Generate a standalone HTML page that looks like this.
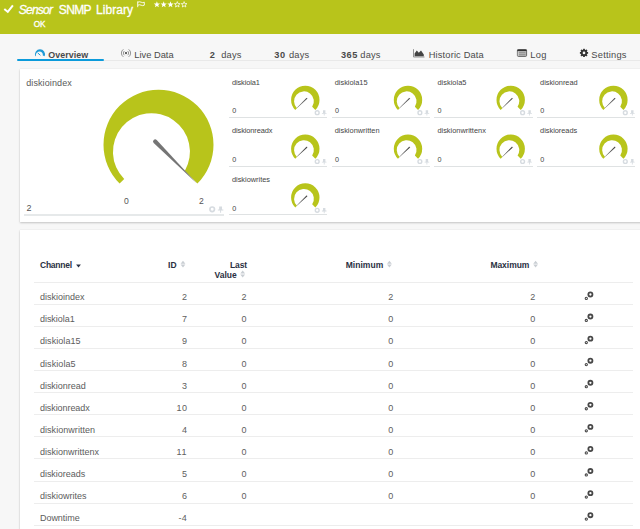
<!DOCTYPE html><html><head><meta charset="utf-8"><style>
*{margin:0;padding:0;box-sizing:border-box}
html,body{width:640px;height:529px;overflow:hidden;background:#f7f7f7;font-family:"Liberation Sans",sans-serif;}
.a{position:absolute;white-space:nowrap;line-height:1}
#hdr{position:absolute;left:0;top:0;width:640px;height:34px;background:#b8c41b}
.panel{position:absolute;background:#fff;box-shadow:0 1px 2px rgba(0,0,0,.2),0 0 1px rgba(0,0,0,.1)}
.hl{position:absolute;height:1px;background:#ededed}
.ul{position:absolute;background:#e6e9ea}
svg{position:absolute;left:0;top:0}
</style></head><body><div id="hdr"></div>
<div class="panel" style="left:20px;top:69px;width:640px;height:153px"></div>
<div class="panel" style="left:20px;top:230px;width:640px;height:320px"></div>
<div class="a" style="left:18px;top:60px;width:640px;height:1px;background:#e9e9e9"></div>
<div class="a" style="left:17.3px;top:59.4px;width:86.5px;height:1.7px;background:#0c9bdb;border-radius:1px"></div>
<div class="ul" style="left:23.8px;top:214.3px;width:200.6px;height:1.5px"></div>
<div class="ul" style="left:228.80px;top:116.80px;width:98.4px;height:1px;background:#dfe2e3"></div>
<div class="ul" style="left:331.50px;top:116.80px;width:98.4px;height:1px;background:#dfe2e3"></div>
<div class="ul" style="left:434.20px;top:116.80px;width:98.4px;height:1px;background:#dfe2e3"></div>
<div class="ul" style="left:536.90px;top:116.80px;width:98.4px;height:1px;background:#dfe2e3"></div>
<div class="ul" style="left:228.80px;top:165.60px;width:98.4px;height:1px;background:#dfe2e3"></div>
<div class="ul" style="left:331.50px;top:165.60px;width:98.4px;height:1px;background:#dfe2e3"></div>
<div class="ul" style="left:434.20px;top:165.60px;width:98.4px;height:1px;background:#dfe2e3"></div>
<div class="ul" style="left:536.90px;top:165.60px;width:98.4px;height:1px;background:#dfe2e3"></div>
<div class="ul" style="left:228.80px;top:214.40px;width:98.4px;height:1px;background:#dfe2e3"></div>
<div class="hl" style="left:34px;top:282px;width:599.3px"></div>
<div class="hl" style="left:34px;top:304.00px;width:599.3px"></div>
<div class="hl" style="left:34px;top:326.07px;width:599.3px"></div>
<div class="hl" style="left:34px;top:348.14px;width:599.3px"></div>
<div class="hl" style="left:34px;top:370.21px;width:599.3px"></div>
<div class="hl" style="left:34px;top:392.28px;width:599.3px"></div>
<div class="hl" style="left:34px;top:414.35px;width:599.3px"></div>
<div class="hl" style="left:34px;top:436.42px;width:599.3px"></div>
<div class="hl" style="left:34px;top:458.49px;width:599.3px"></div>
<div class="hl" style="left:34px;top:480.56px;width:599.3px"></div>
<div class="hl" style="left:34px;top:502.63px;width:599.3px"></div>
<div class="hl" style="left:34px;top:524.70px;width:599.3px"></div>
<div class="a" style="left:18.76px;top:4px;font-size:12px;color:#fff;font-style:italic;letter-spacing:-0.759px;-webkit-text-stroke:0.3px #fff;">Sensor</div>
<div class="a" style="left:58.86px;top:4px;font-size:12px;color:#fff;letter-spacing:-0.673px;-webkit-text-stroke:0.3px #fff;">SNMP</div>
<div class="a" style="left:96.06px;top:4px;font-size:12px;color:#fff;letter-spacing:0.042px;-webkit-text-stroke:0.3px #fff;">Library</div>
<div class="a" style="left:33.83px;top:21px;font-size:8.2px;color:#fff;letter-spacing:-0.248px;-webkit-text-stroke:0.3px #fff;">OK</div>
<div class="a" style="left:48.28px;top:51px;font-size:8.9px;color:#4a4a4a;font-weight:bold;letter-spacing:0.045px;">Overview</div>
<div class="a" style="left:134.35px;top:51px;font-size:9.3px;color:#4a4a4a;">Live Data</div>
<div class="a" style="left:209.64px;top:51px;font-size:9.2px;color:#4a4a4a;font-weight:bold;">2</div>
<div class="a" style="left:221.25px;top:51px;font-size:9.3px;color:#4a4a4a;letter-spacing:0.190px;">days</div>
<div class="a" style="left:274.36px;top:51px;font-size:9.2px;color:#4a4a4a;font-weight:bold;letter-spacing:0.527px;">30</div>
<div class="a" style="left:288.95px;top:51px;font-size:9.3px;color:#4a4a4a;letter-spacing:0.190px;">days</div>
<div class="a" style="left:340.96px;top:51px;font-size:9.2px;color:#4a4a4a;font-weight:bold;letter-spacing:0.515px;">365</div>
<div class="a" style="left:360.35px;top:51px;font-size:9.3px;color:#4a4a4a;letter-spacing:0.165px;">days</div>
<div class="a" style="left:428.75px;top:51px;font-size:9.3px;color:#4a4a4a;letter-spacing:0.145px;">Historic Data</div>
<div class="a" style="left:530.15px;top:51px;font-size:9.3px;color:#4a4a4a;letter-spacing:0.395px;">Log</div>
<div class="a" style="left:591.35px;top:51px;font-size:9.3px;color:#4a4a4a;letter-spacing:0.226px;">Settings</div>
<div class="a" style="left:26.17px;top:79px;font-size:9px;color:#5a5a5a;letter-spacing:0.107px;">diskioindex</div>
<div class="a" style="left:26.42px;top:204px;font-size:9px;color:#555;">2</div>
<div class="a" style="left:124.06px;top:197px;font-size:8.6px;color:#555;">0</div>
<div class="a" style="left:199.06px;top:197px;font-size:8.6px;color:#555;">2</div>
<div class="a" style="left:231.98px;top:79px;font-size:7.4px;color:#444;letter-spacing:-0.103px;">diskiola1</div>
<div class="a" style="left:232.20px;top:107px;font-size:7.2px;color:#444;">0</div>
<div class="a" style="left:334.68px;top:79px;font-size:7.4px;color:#444;letter-spacing:0.006px;">diskiola15</div>
<div class="a" style="left:334.90px;top:107px;font-size:7.2px;color:#444;">0</div>
<div class="a" style="left:437.38px;top:79px;font-size:7.4px;color:#444;letter-spacing:0.041px;">diskiola5</div>
<div class="a" style="left:437.60px;top:107px;font-size:7.2px;color:#444;">0</div>
<div class="a" style="left:540.08px;top:79px;font-size:7.4px;color:#444;letter-spacing:-0.025px;">diskionread</div>
<div class="a" style="left:540.30px;top:107px;font-size:7.2px;color:#444;">0</div>
<div class="a" style="left:231.98px;top:127px;font-size:7.4px;color:#444;letter-spacing:-0.089px;">diskionreadx</div>
<div class="a" style="left:232.20px;top:156px;font-size:7.2px;color:#444;">0</div>
<div class="a" style="left:334.68px;top:127px;font-size:7.4px;color:#444;letter-spacing:0.011px;">diskionwritten</div>
<div class="a" style="left:334.90px;top:156px;font-size:7.2px;color:#444;">0</div>
<div class="a" style="left:437.38px;top:127px;font-size:7.4px;color:#444;">diskionwrittenx</div>
<div class="a" style="left:437.60px;top:156px;font-size:7.2px;color:#444;">0</div>
<div class="a" style="left:540.08px;top:127px;font-size:7.4px;color:#444;letter-spacing:-0.023px;">diskioreads</div>
<div class="a" style="left:540.30px;top:156px;font-size:7.2px;color:#444;">0</div>
<div class="a" style="left:231.98px;top:176px;font-size:7.4px;color:#444;letter-spacing:-0.014px;">diskiowrites</div>
<div class="a" style="left:232.20px;top:205px;font-size:7.2px;color:#444;">0</div>
<div class="a" style="left:40.01px;top:261px;font-size:8.5px;color:#2a3042;font-weight:bold;letter-spacing:-0.242px;">Channel</div>
<div class="a" style="left:168.10px;top:261px;font-size:8.5px;color:#2a3042;font-weight:bold;">ID</div>
<div class="a" style="left:230.00px;top:261px;font-size:8.5px;color:#2a3042;font-weight:bold;letter-spacing:-0.099px;">Last</div>
<div class="a" style="left:214.41px;top:271px;font-size:8.5px;color:#2a3042;font-weight:bold;letter-spacing:0.034px;">Value</div>
<div class="a" style="left:345.65px;top:261px;font-size:8.5px;color:#2a3042;font-weight:bold;letter-spacing:0.054px;">Minimum</div>
<div class="a" style="left:490.40px;top:261px;font-size:8.5px;color:#2a3042;font-weight:bold;letter-spacing:-0.040px;">Maximum</div>
<div class="a" style="left:39.97px;top:293px;font-size:9px;color:#5c5c5c;letter-spacing:0.012px;">diskioindex</div>
<div class="a" style="left:181.89px;top:293px;font-size:9px;color:#606060;">2</div>
<div class="a" style="left:241.59px;top:293px;font-size:9px;color:#606060;">2</div>
<div class="a" style="left:388.29px;top:293px;font-size:9px;color:#606060;">2</div>
<div class="a" style="left:530.29px;top:293px;font-size:9px;color:#606060;">2</div>
<div class="a" style="left:39.97px;top:315px;font-size:9px;color:#5c5c5c;letter-spacing:-0.041px;">diskiola1</div>
<div class="a" style="left:181.89px;top:315px;font-size:9px;color:#606060;">7</div>
<div class="a" style="left:241.59px;top:315px;font-size:9px;color:#606060;">0</div>
<div class="a" style="left:388.29px;top:315px;font-size:9px;color:#606060;">0</div>
<div class="a" style="left:530.29px;top:315px;font-size:9px;color:#606060;">0</div>
<div class="a" style="left:39.97px;top:337px;font-size:9px;color:#5c5c5c;letter-spacing:0.063px;">diskiola15</div>
<div class="a" style="left:181.89px;top:337px;font-size:9px;color:#606060;">9</div>
<div class="a" style="left:241.59px;top:337px;font-size:9px;color:#606060;">0</div>
<div class="a" style="left:388.29px;top:337px;font-size:9px;color:#606060;">0</div>
<div class="a" style="left:530.29px;top:337px;font-size:9px;color:#606060;">0</div>
<div class="a" style="left:39.97px;top:360px;font-size:9px;color:#5c5c5c;letter-spacing:0.070px;">diskiola5</div>
<div class="a" style="left:181.89px;top:360px;font-size:9px;color:#606060;">8</div>
<div class="a" style="left:241.59px;top:360px;font-size:9px;color:#606060;">0</div>
<div class="a" style="left:388.29px;top:360px;font-size:9px;color:#606060;">0</div>
<div class="a" style="left:530.29px;top:360px;font-size:9px;color:#606060;">0</div>
<div class="a" style="left:39.97px;top:382px;font-size:9px;color:#5c5c5c;letter-spacing:-0.034px;">diskionread</div>
<div class="a" style="left:181.89px;top:382px;font-size:9px;color:#606060;">3</div>
<div class="a" style="left:241.59px;top:382px;font-size:9px;color:#606060;">0</div>
<div class="a" style="left:388.29px;top:382px;font-size:9px;color:#606060;">0</div>
<div class="a" style="left:530.29px;top:382px;font-size:9px;color:#606060;">0</div>
<div class="a" style="left:39.97px;top:404px;font-size:9px;color:#5c5c5c;letter-spacing:-0.073px;">diskionreadx</div>
<div class="a" style="left:176.57px;top:404px;font-size:9px;color:#606060;letter-spacing:0.322px;">10</div>
<div class="a" style="left:241.59px;top:404px;font-size:9px;color:#606060;">0</div>
<div class="a" style="left:388.29px;top:404px;font-size:9px;color:#606060;">0</div>
<div class="a" style="left:530.29px;top:404px;font-size:9px;color:#606060;">0</div>
<div class="a" style="left:39.97px;top:426px;font-size:9px;color:#5c5c5c;letter-spacing:0.045px;">diskionwritten</div>
<div class="a" style="left:181.89px;top:426px;font-size:9px;color:#606060;">4</div>
<div class="a" style="left:241.59px;top:426px;font-size:9px;color:#606060;">0</div>
<div class="a" style="left:388.29px;top:426px;font-size:9px;color:#606060;">0</div>
<div class="a" style="left:530.29px;top:426px;font-size:9px;color:#606060;">0</div>
<div class="a" style="left:39.97px;top:448px;font-size:9px;color:#5c5c5c;letter-spacing:0.009px;">diskionwrittenx</div>
<div class="a" style="left:176.57px;top:448px;font-size:9px;color:#606060;letter-spacing:0.658px;">11</div>
<div class="a" style="left:241.59px;top:448px;font-size:9px;color:#606060;">0</div>
<div class="a" style="left:388.29px;top:448px;font-size:9px;color:#606060;">0</div>
<div class="a" style="left:530.29px;top:448px;font-size:9px;color:#606060;">0</div>
<div class="a" style="left:39.97px;top:470px;font-size:9px;color:#5c5c5c;letter-spacing:-0.034px;">diskioreads</div>
<div class="a" style="left:181.89px;top:470px;font-size:9px;color:#606060;">5</div>
<div class="a" style="left:241.59px;top:470px;font-size:9px;color:#606060;">0</div>
<div class="a" style="left:388.29px;top:470px;font-size:9px;color:#606060;">0</div>
<div class="a" style="left:530.29px;top:470px;font-size:9px;color:#606060;">0</div>
<div class="a" style="left:39.97px;top:492px;font-size:9px;color:#5c5c5c;letter-spacing:0.012px;">diskiowrites</div>
<div class="a" style="left:181.89px;top:492px;font-size:9px;color:#606060;">6</div>
<div class="a" style="left:241.59px;top:492px;font-size:9px;color:#606060;">0</div>
<div class="a" style="left:388.29px;top:492px;font-size:9px;color:#606060;">0</div>
<div class="a" style="left:530.29px;top:492px;font-size:9px;color:#606060;">0</div>
<div class="a" style="left:39.97px;top:514px;font-size:9px;color:#5c5c5c;letter-spacing:-0.044px;">Downtime</div>
<div class="a" style="left:178.47px;top:514px;font-size:9px;color:#606060;letter-spacing:0.372px;">-4</div>
<svg width="640" height="529" viewBox="0 0 640 529"><path d="M119.61,183.59 A55.00,55.00 0 1 1 197.39,183.59 L184.79,170.99 A38.50,38.50 0 1 0 124.21,178.99 Z" fill="#b8c41b"/>
<path d="M153.7,142.9 L196.9,183.6 L156.7,139.9 A2.1,2.1 0 0 0 153.7,142.9 Z" fill="#757575"/>
<circle cx="212.2" cy="209.3" r="2.28" fill="none" stroke="#d6dbe0" stroke-width="1.68"/><path d="M219.16,206.42000000000002 h2.88 v3.12 h1.32 v1.08 h-5.52 v-1.08 h1.32 Z M220.12,210.62 h0.96 v2.16 h-0.96 Z" fill="#d6dbe0"/>
<path d="M295.26,109.94 A14.20,14.20 0 1 1 315.34,109.94 L312.17,106.77 A9.90,9.90 0 1 0 296.96,108.24 Z" fill="#b8c41b"/>
<path d="M306.60,97.90 L296.90,108.00 L307.30,98.60 Z" fill="#3a3a3a" stroke="#3a3a3a" stroke-width="0.2"/>
<circle cx="317.2" cy="112.7" r="1.9" fill="none" stroke="#d6dbe0" stroke-width="1.4"/><path d="M323.0,110.3 h2.4 v2.6 h1.1 v0.9 h-4.6 v-0.9 h1.1 Z M323.8,113.8 h0.8 v1.8 h-0.8 Z" fill="#d6dbe0"/>
<path d="M397.96,109.94 A14.20,14.20 0 1 1 418.04,109.94 L414.87,106.77 A9.90,9.90 0 1 0 399.66,108.24 Z" fill="#b8c41b"/>
<path d="M409.30,97.90 L399.60,108.00 L410.00,98.60 Z" fill="#3a3a3a" stroke="#3a3a3a" stroke-width="0.2"/>
<circle cx="419.90000000000003" cy="112.7" r="1.9" fill="none" stroke="#d6dbe0" stroke-width="1.4"/><path d="M425.70000000000005,110.3 h2.4 v2.6 h1.1 v0.9 h-4.6 v-0.9 h1.1 Z M426.50000000000006,113.8 h0.8 v1.8 h-0.8 Z" fill="#d6dbe0"/>
<path d="M500.66,109.94 A14.20,14.20 0 1 1 520.74,109.94 L517.57,106.77 A9.90,9.90 0 1 0 502.36,108.24 Z" fill="#b8c41b"/>
<path d="M512.00,97.90 L502.30,108.00 L512.70,98.60 Z" fill="#3a3a3a" stroke="#3a3a3a" stroke-width="0.2"/>
<circle cx="522.6" cy="112.7" r="1.9" fill="none" stroke="#d6dbe0" stroke-width="1.4"/><path d="M528.4,110.3 h2.4 v2.6 h1.1 v0.9 h-4.6 v-0.9 h1.1 Z M529.2,113.8 h0.8 v1.8 h-0.8 Z" fill="#d6dbe0"/>
<path d="M603.36,109.94 A14.20,14.20 0 1 1 623.44,109.94 L620.27,106.77 A9.90,9.90 0 1 0 605.06,108.24 Z" fill="#b8c41b"/>
<path d="M614.70,97.90 L605.00,108.00 L615.40,98.60 Z" fill="#3a3a3a" stroke="#3a3a3a" stroke-width="0.2"/>
<circle cx="625.3" cy="112.7" r="1.9" fill="none" stroke="#d6dbe0" stroke-width="1.4"/><path d="M631.0999999999999,110.3 h2.4 v2.6 h1.1 v0.9 h-4.6 v-0.9 h1.1 Z M631.9,113.8 h0.8 v1.8 h-0.8 Z" fill="#d6dbe0"/>
<path d="M295.26,158.74 A14.20,14.20 0 1 1 315.34,158.74 L312.17,155.57 A9.90,9.90 0 1 0 296.96,157.04 Z" fill="#b8c41b"/>
<path d="M306.60,146.70 L296.90,156.80 L307.30,147.40 Z" fill="#3a3a3a" stroke="#3a3a3a" stroke-width="0.2"/>
<circle cx="317.2" cy="161.5" r="1.9" fill="none" stroke="#d6dbe0" stroke-width="1.4"/><path d="M323.0,159.1 h2.4 v2.6 h1.1 v0.9 h-4.6 v-0.9 h1.1 Z M323.8,162.6 h0.8 v1.8 h-0.8 Z" fill="#d6dbe0"/>
<path d="M397.96,158.74 A14.20,14.20 0 1 1 418.04,158.74 L414.87,155.57 A9.90,9.90 0 1 0 399.66,157.04 Z" fill="#b8c41b"/>
<path d="M409.30,146.70 L399.60,156.80 L410.00,147.40 Z" fill="#3a3a3a" stroke="#3a3a3a" stroke-width="0.2"/>
<circle cx="419.90000000000003" cy="161.5" r="1.9" fill="none" stroke="#d6dbe0" stroke-width="1.4"/><path d="M425.70000000000005,159.1 h2.4 v2.6 h1.1 v0.9 h-4.6 v-0.9 h1.1 Z M426.50000000000006,162.6 h0.8 v1.8 h-0.8 Z" fill="#d6dbe0"/>
<path d="M500.66,158.74 A14.20,14.20 0 1 1 520.74,158.74 L517.57,155.57 A9.90,9.90 0 1 0 502.36,157.04 Z" fill="#b8c41b"/>
<path d="M512.00,146.70 L502.30,156.80 L512.70,147.40 Z" fill="#3a3a3a" stroke="#3a3a3a" stroke-width="0.2"/>
<circle cx="522.6" cy="161.5" r="1.9" fill="none" stroke="#d6dbe0" stroke-width="1.4"/><path d="M528.4,159.1 h2.4 v2.6 h1.1 v0.9 h-4.6 v-0.9 h1.1 Z M529.2,162.6 h0.8 v1.8 h-0.8 Z" fill="#d6dbe0"/>
<path d="M603.36,158.74 A14.20,14.20 0 1 1 623.44,158.74 L620.27,155.57 A9.90,9.90 0 1 0 605.06,157.04 Z" fill="#b8c41b"/>
<path d="M614.70,146.70 L605.00,156.80 L615.40,147.40 Z" fill="#3a3a3a" stroke="#3a3a3a" stroke-width="0.2"/>
<circle cx="625.3" cy="161.5" r="1.9" fill="none" stroke="#d6dbe0" stroke-width="1.4"/><path d="M631.0999999999999,159.1 h2.4 v2.6 h1.1 v0.9 h-4.6 v-0.9 h1.1 Z M631.9,162.6 h0.8 v1.8 h-0.8 Z" fill="#d6dbe0"/>
<path d="M295.26,207.54 A14.20,14.20 0 1 1 315.34,207.54 L312.17,204.37 A9.90,9.90 0 1 0 296.96,205.84 Z" fill="#b8c41b"/>
<path d="M306.60,195.50 L296.90,205.60 L307.30,196.20 Z" fill="#3a3a3a" stroke="#3a3a3a" stroke-width="0.2"/>
<circle cx="317.2" cy="210.3" r="1.9" fill="none" stroke="#d6dbe0" stroke-width="1.4"/><path d="M323.0,207.9 h2.4 v2.6 h1.1 v0.9 h-4.6 v-0.9 h1.1 Z M323.8,211.4 h0.8 v1.8 h-0.8 Z" fill="#d6dbe0"/>
<path d="M76.1,264.6 h4.8 l-2.4,2.8 Z" fill="#2a3042"/>
<path d="M180.6,263.7 l2.4,-3.0 l2.4,3.0 Z M180.6,264.59999999999997 h4.8 l-2.4,3.0 Z" fill="#c9ced3"/>
<path d="M240.3,273.6 l2.4,-3.0 l2.4,3.0 Z M240.3,274.5 h4.8 l-2.4,3.0 Z" fill="#c9ced3"/>
<path d="M387.0,263.7 l2.4,-3.0 l2.4,3.0 Z M387.0,264.59999999999997 h4.8 l-2.4,3.0 Z" fill="#c9ced3"/>
<path d="M533.2,263.7 l2.4,-3.0 l2.4,3.0 Z M533.2,264.59999999999997 h4.8 l-2.4,3.0 Z" fill="#c9ced3"/>
<circle cx="590.40" cy="294.50" r="2.05" fill="none" stroke="#484848" stroke-width="1.8"/><circle cx="586.30" cy="298.40" r="1.1" fill="none" stroke="#484848" stroke-width="1.1"/>
<circle cx="590.40" cy="316.57" r="2.05" fill="none" stroke="#484848" stroke-width="1.8"/><circle cx="586.30" cy="320.47" r="1.1" fill="none" stroke="#484848" stroke-width="1.1"/>
<circle cx="590.40" cy="338.64" r="2.05" fill="none" stroke="#484848" stroke-width="1.8"/><circle cx="586.30" cy="342.54" r="1.1" fill="none" stroke="#484848" stroke-width="1.1"/>
<circle cx="590.40" cy="360.71" r="2.05" fill="none" stroke="#484848" stroke-width="1.8"/><circle cx="586.30" cy="364.61" r="1.1" fill="none" stroke="#484848" stroke-width="1.1"/>
<circle cx="590.40" cy="382.78" r="2.05" fill="none" stroke="#484848" stroke-width="1.8"/><circle cx="586.30" cy="386.68" r="1.1" fill="none" stroke="#484848" stroke-width="1.1"/>
<circle cx="590.40" cy="404.85" r="2.05" fill="none" stroke="#484848" stroke-width="1.8"/><circle cx="586.30" cy="408.75" r="1.1" fill="none" stroke="#484848" stroke-width="1.1"/>
<circle cx="590.40" cy="426.92" r="2.05" fill="none" stroke="#484848" stroke-width="1.8"/><circle cx="586.30" cy="430.82" r="1.1" fill="none" stroke="#484848" stroke-width="1.1"/>
<circle cx="590.40" cy="448.99" r="2.05" fill="none" stroke="#484848" stroke-width="1.8"/><circle cx="586.30" cy="452.89" r="1.1" fill="none" stroke="#484848" stroke-width="1.1"/>
<circle cx="590.40" cy="471.06" r="2.05" fill="none" stroke="#484848" stroke-width="1.8"/><circle cx="586.30" cy="474.96" r="1.1" fill="none" stroke="#484848" stroke-width="1.1"/>
<circle cx="590.40" cy="493.13" r="2.05" fill="none" stroke="#484848" stroke-width="1.8"/><circle cx="586.30" cy="497.03" r="1.1" fill="none" stroke="#484848" stroke-width="1.1"/>
<circle cx="590.40" cy="515.20" r="2.05" fill="none" stroke="#484848" stroke-width="1.8"/><circle cx="586.30" cy="519.10" r="1.1" fill="none" stroke="#484848" stroke-width="1.1"/>
<path d="M4.3,8.9 L7.8,11.9 L12.9,5.4" stroke="#fff" stroke-width="2" fill="none" stroke-linecap="butt" stroke-linejoin="miter"/>
<path d="M137.7,1.4 V7.2 M137.9,2.2 q1.6,-0.9 3.2,0 t3.2,0 v3 q-1.6,0.9 -3.2,0 t-3.2,0" stroke="#fff" stroke-width="0.9" fill="none"/>
<polygon points="156.90,1.30 157.71,3.48 160.04,3.58 158.22,5.03 158.84,7.27 156.90,5.99 154.96,7.27 155.58,5.03 153.76,3.58 156.09,3.48" fill="#fff"/>
<polygon points="163.70,1.30 164.51,3.48 166.84,3.58 165.02,5.03 165.64,7.27 163.70,5.99 161.76,7.27 162.38,5.03 160.56,3.58 162.89,3.48" fill="#fff"/>
<polygon points="170.50,1.30 171.31,3.48 173.64,3.58 171.82,5.03 172.44,7.27 170.50,5.99 168.56,7.27 169.18,5.03 167.36,3.58 169.69,3.48" fill="#fff"/>
<polygon points="177.30,1.60 178.04,3.58 180.15,3.67 178.50,4.99 179.06,7.03 177.30,5.86 175.54,7.03 176.10,4.99 174.45,3.67 176.56,3.58" fill="none" stroke="#fff" stroke-width="0.75"/>
<polygon points="184.10,1.60 184.84,3.58 186.95,3.67 185.30,4.99 185.86,7.03 184.10,5.86 182.34,7.03 182.90,4.99 181.25,3.67 183.36,3.58" fill="none" stroke="#fff" stroke-width="0.75"/>
<path d="M35.36,56.17 A5.0,5.0 0 1 1 44.64,56.17 L42.83,55.44 A3.5,3.5 0 1 0 36.00,55.91 Z" fill="#1f9ad6"/>
<path d="M37.7,52.9 L40.4,55.3" stroke="#1f9ad6" stroke-width="1.0"/>
<circle cx="126.0" cy="53.1" r="1.05" fill="#444"/><path d="M124.51,50.97 A2.6,2.6 0 0 0 124.51,55.23 M127.49,50.97 A2.6,2.6 0 0 1 127.49,55.23 M123.36,49.33 A4.6,4.6 0 0 0 123.36,56.87 M128.64,49.33 A4.6,4.6 0 0 1 128.64,56.87" stroke="#777" stroke-width="0.8" fill="none"/>
<path d="M413.5,49.2 V57 H424.5" stroke="#888" stroke-width="0.9" fill="none"/><path d="M414.6,56.2 V53.4 L416.8,50.4 L418.8,52.8 L421,50.6 L423.8,54.6 V56.2 Z" fill="#444"/>
<rect x="517.4" y="49.6" width="9.2" height="6.8" rx="1" fill="#b8b8b8" stroke="#4a4a4a" stroke-width="0.8"/><path d="M517.4,50.3 h9.2" stroke="#333" stroke-width="1.5"/><path d="M518.6,52.6 h6.8 M518.6,54.4 h6.8" stroke="#8a8a8a" stroke-width="0.8"/><path d="M518.2,51.4 v4.4" stroke="#ddd" stroke-width="0.8"/>
<rect x="583.1" y="48.8" width="1.8" height="8.2" fill="#333" transform="rotate(0 584.0 52.9)"/><rect x="583.1" y="48.8" width="1.8" height="8.2" fill="#333" transform="rotate(45 584.0 52.9)"/><rect x="583.1" y="48.8" width="1.8" height="8.2" fill="#333" transform="rotate(90 584.0 52.9)"/><rect x="583.1" y="48.8" width="1.8" height="8.2" fill="#333" transform="rotate(135 584.0 52.9)"/><circle cx="584.0" cy="52.9" r="3.1" fill="#333"/><circle cx="584.0" cy="52.9" r="1.3" fill="#f7f7f7"/></svg></body></html>
